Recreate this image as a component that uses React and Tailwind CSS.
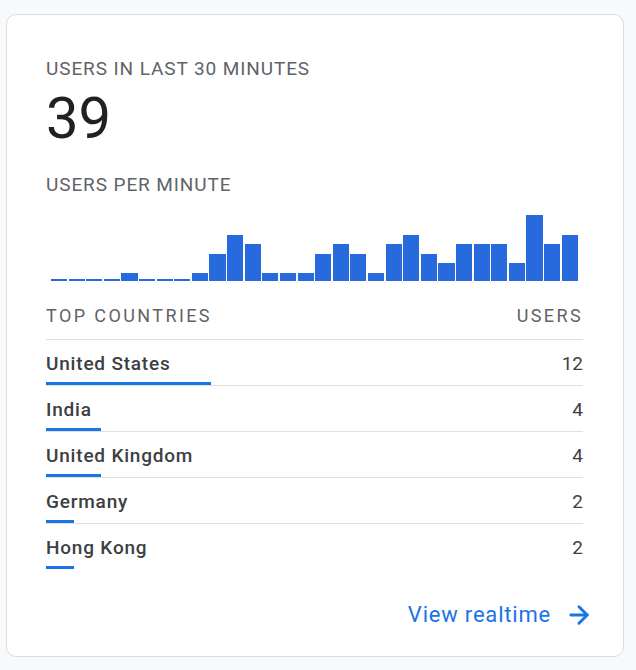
import React from 'react';
import { ArrowRight } from 'lucide-react';

const perMinute = [0, 0, 0, 0, 1, 0, 0, 0, 1, 3, 5, 4, 1, 1, 1, 3, 4, 3, 1, 4, 5, 3, 2, 4, 4, 4, 2, 7, 4, 5];

const countries = [
  { name: 'United States', users: 12 },
  { name: 'India', users: 4 },
  { name: 'United Kingdom', users: 4 },
  { name: 'Germany', users: 2 },
  { name: 'Hong Kong', users: 2 },
];

const barHeight = (v) => (v === 0 ? 2 : v === 1 ? 8 : 8 + (v - 1) * 9.6);

const App = () => {
  return (
    <div className="min-h-screen bg-[#f8f9fa] pt-[14px] pl-[6px]" style={{ fontFamily: 'Roboto, "Liberation Sans", sans-serif' }}>
      <div className="w-[618px] h-[643px] bg-white border border-[#dadce0] rounded-[10px] pl-[39px] pr-[40px] pt-[42px] flex flex-col">
        {/* Users in last 30 minutes */}
        <div className="text-[19px] leading-6 text-[#5f6368] tracking-[0.9px]">USERS IN LAST 30 MINUTES</div>
        <div className="text-[58px] leading-[60px] text-[#202124] mt-[7px] font-normal">39</div>

        <div className="text-[19px] leading-6 text-[#5f6368] tracking-[0.9px] mt-[25px]">USERS PER MINUTE</div>

        {/* Bar chart */}
        <div className="flex items-end gap-[1.5px] h-[70px] mt-[14px] pl-[5px] pr-[5px]">
          {perMinute.map((v, i) => (
            <div key={i} className="flex-1 bg-[#266ade]" style={{ height: barHeight(v) }} />
          ))}
        </div>

        {/* Top countries */}
        <div className="flex justify-between text-[18px] leading-6 text-[#5f6368] tracking-[2.4px] mt-[23px] pb-[11px] border-b border-[#e0e0e0]">
          <span>TOP COUNTRIES</span>
          <span>USERS</span>
        </div>

        {countries.map((c, i) => (
          <div key={c.name} className={`flex flex-col ${i < countries.length - 1 ? 'border-b border-[#e0e0e0]' : ''}`}>
            <div className="flex justify-between items-center text-[19px] leading-6 text-[#3c4043] pt-[12px] pb-[6px]">
              <span className="font-medium tracking-[0.8px]">{c.name}</span>
              <span>{c.users}</span>
            </div>
            <div className="h-[3px] bg-[#1a73e8]" style={{ width: c.users * 13.75 }} />
          </div>
        ))}

        <div className="flex justify-end items-center mt-auto mb-[25px] mr-[-10px] text-[#1a73e8] text-[22px] gap-[14px]">
          <span className="tracking-[0.8px]">View realtime</span>
          <ArrowRight size={28} strokeWidth={2.5} />
        </div>
      </div>
    </div>
  );
};

export default App;
